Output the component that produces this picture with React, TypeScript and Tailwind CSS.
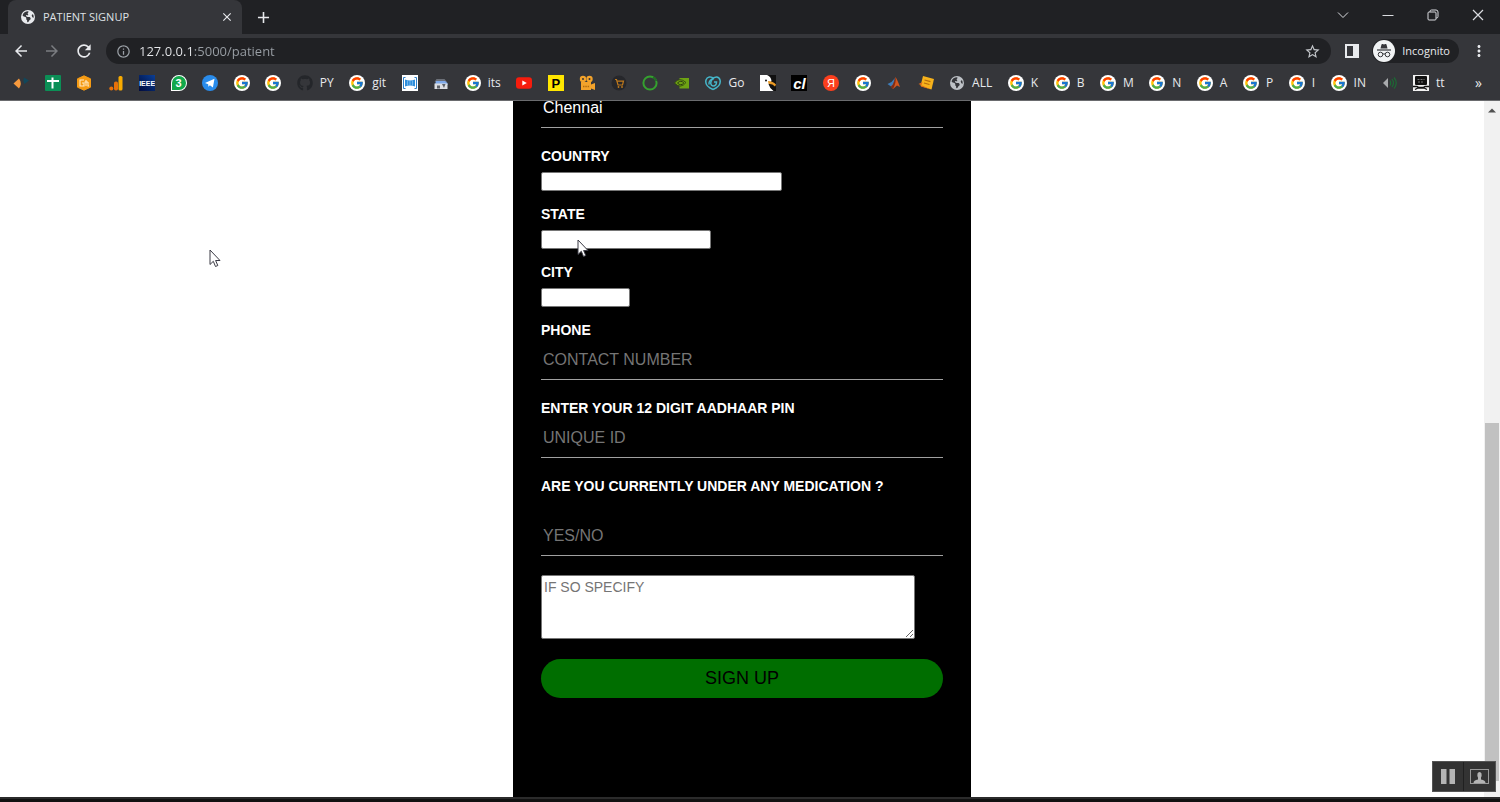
import type { ReactNode } from "react";
import { FaEarthAmericas, FaGithub } from "react-icons/fa6";
import { FcGoogle } from "react-icons/fc";
import {
  MdAdd,
  MdArrowBack,
  MdArrowForward,
  MdClose,
  MdInfoOutline,
  MdMoreVert,
  MdRefresh,
  MdStarBorder,
} from "react-icons/md";

type Bookmark = { name: string; icon: ReactNode; label?: string };

const Google = () => (
  <span className="flex size-4 items-center justify-center rounded-full bg-white">
    <FcGoogle size={14} />
  </span>
);

const Fish = () => (
  <svg viewBox="0 0 16 16" className="size-4">
    <path d="M.5 8.500L6 3.500q3.500 5 0 10z" fill="#f79a3e" />
    <path d="M11 2.500l5 3-4.500 3.500q-2-3-.5-6.500z" fill="#12475a" />
  </svg>
);

const Sheets = () => (
  <svg viewBox="0 0 16 16" className="size-4">
    <rect width="16" height="16" rx="1" fill="#0b8f56" />
    <path d="M2 6h12M7.500 2.500v11" stroke="#fff" strokeWidth="2" />
  </svg>
);

const Hexagon = () => (
  <svg viewBox="0 0 16 16" className="size-4">
    <path d="M8 .8l6.500 3v8.400L8 15.200l-6.500-3V3.800z" fill="#f59b14" stroke="#f59b14" strokeLinejoin="round" />
    <path d="M8 5H4v6h4V8H6M10 5v6M8.500 7H12M12 7v4h1" fill="none" stroke="#ffe9c4" strokeWidth="1.100" />
  </svg>
);

const Analytics = () => (
  <svg viewBox="0 0 16 16" className="size-4">
    <circle cx="3.300" cy="13.500" r="2" fill="#e8710a" />
    <rect x="6" y="6.500" width="4" height="9" rx="1.800" fill="#e8710a" />
    <rect x="10.500" y="1" width="4" height="14.500" rx="1.500" fill="#f9ab00" />
  </svg>
);

const Ieee = () => (
  <span className="flex size-4 items-center justify-center overflow-hidden bg-linear-to-tr from-[#020b3d] to-[#0b3f96] font-['Liberation_Sans'] text-[7px] leading-none font-bold text-white">
    IEEE
  </span>
);

const Whatsapp = () => (
  <span className="flex size-4 items-center justify-center rounded-full rounded-bl-sm border border-white bg-[#12a84b] font-['Liberation_Sans'] text-[11px] leading-none font-bold text-white">
    3
  </span>
);

const Telegram = () => (
  <svg viewBox="0 0 16 16" className="size-4">
    <circle cx="8" cy="8" r="8" fill="#2a8ceb" />
    <path d="M3 8l9.500-4.200-1.600 8.700-3-2.200-1.500 1.500-.2-2.600z" fill="#fff" />
  </svg>
);

const Scan = () => (
  <svg viewBox="0 0 16 16" className="size-4">
    <rect width="16" height="16" fill="#fff" />
    <path d="M3.500 2.500h-2v11h2M12.500 2.500h2v11h-2" fill="none" stroke="#2b7fc9" />
    <path d="M3 4.500q5 1.800 10 0v7q-5-1.800-10 0z" fill="#2e8fdd" />
    <path d="M5.500 5.500v5M8 6v4M10.500 5.500v5" stroke="#8cc4f0" strokeWidth=".7" />
  </svg>
);

const Printer = () => (
  <svg viewBox="0 0 16 16" className="size-4">
    <path d="M3.500 4h8l2.500 3H1.500z" fill="#6c7078" />
    <path d="M3 6h9l2.500 2v2H2z" fill="#7fa9e8" />
    <path d="M1.500 8.500h13V14h-13z" fill="#dcdee2" />
    <path d="M4 10.500h3v3H4zM9 9h3.500L11 13z" fill="#5d6168" />
  </svg>
);

const Youtube = () => (
  <svg viewBox="0 0 16 16" className="size-4">
    <rect y="2.300" width="16" height="11.400" rx="3" fill="#f61c0d" />
    <path d="M6.300 5.500v5L10.800 8z" fill="#fff" />
  </svg>
);

const LetterP = () => (
  <span className="flex size-4 items-center justify-center bg-[#ffe600] font-['Liberation_Sans'] text-[13px] leading-none font-bold text-black">
    P
  </span>
);

const Camera = () => (
  <svg viewBox="0 0 16 16" className="size-4">
    <circle cx="4" cy="4" r="3.200" fill="#f3a32b" />
    <circle cx="10.500" cy="4" r="3.200" fill="#f3a32b" />
    <circle cx="4" cy="4" r="1" fill="#35363a" />
    <circle cx="10.500" cy="4" r="1" fill="#35363a" />
    <path d="M2 7h10v2.500L16 8v7l-4-1.500V15H2z" fill="#f3a32b" />
    <path d="M4 11.500h6.500" stroke="#b36d0e" strokeWidth="1.500" strokeDasharray="1.500 .8" />
  </svg>
);

const Cart = () => (
  <svg viewBox="0 0 16 16" className="size-4">
    <circle cx="8" cy="8" r="7.500" fill="#26272b" />
    <path d="M4 4.500h1.500L7 10h4.500l1-3.800H6" fill="none" stroke="#c07a1c" strokeWidth="1.200" />
    <circle cx="7.500" cy="12" r=".9" fill="#c07a1c" />
    <circle cx="11" cy="12" r=".9" fill="#c07a1c" />
  </svg>
);

const Ring = () => (
  <svg viewBox="0 0 16 16" className="size-4">
    <circle cx="8" cy="8" r="6.600" fill="none" stroke="#35a02f" strokeWidth="2" />
    <path d="M11 2.200A6.600 6.600 0 0 1 14.300 6" fill="none" stroke="#236b26" strokeWidth="2.200" />
  </svg>
);

const Nvidia = () => (
  <svg viewBox="0 0 16 16" className="size-4">
    <path d="M5.500 3H15v10.500H5.500z" fill="#6ea313" />
    <path d="M.5 8q5-6.500 11.500-.5-5.500 7-11.500.5z" fill="#6ea313" stroke="#2f4312" strokeWidth=".8" />
    <path d="M3.500 8q3.500-3.500 6.300 0-3 3.500-6.300 0z" fill="none" stroke="#2c3d10" />
  </svg>
);

const GodaddyHeart = () => (
  <svg viewBox="0 0 16 16" className="size-4" fill="none" stroke="#45b5c9" strokeWidth="1.500">
    <path d="M8 14.500C3 12.500 0 9 1 5 2 1.500 6 1 9 3.500" />
    <path d="M8 14.500c5-2 8-5.500 7-9.500C14 1 9.500 1 7 4.500c-2 3-1.500 6 1 6.500 2 0 3.500-1.500 3.500-4H9" />
    <path d="M4 9.500C3.500 6.500 6 4 9 3.500" />
  </svg>
);

const Bird = () => (
  <svg viewBox="0 0 16 16" className="size-4">
    <rect width="16" height="16" fill="#111" />
    <path d="M0 0h7q4 1.500 4.500 6-1.500 2-3 3 1 4 5 7H0z" fill="#fff" />
    <path d="M8 6q5 0 8 3.500l-1 2q-2-2.500-6.500-2.800z" fill="#eb9a25" />
    <circle cx="6" cy="5.500" r="1" fill="#111" />
  </svg>
);

const Cl = () => (
  <span className="flex size-4 items-center justify-center bg-black font-['Liberation_Sans'] text-[15px] leading-none font-bold text-white italic">
    cl
  </span>
);

const Yandex = () => (
  <span className="flex size-4 items-center justify-center rounded-full bg-[#fc3f1d] font-['Liberation_Sans'] text-[11px] leading-none text-white">
    Я
  </span>
);

const Matlab = () => (
  <svg viewBox="0 0 16 16" className="size-4">
    <path d="M1.500 9l4-2L9 3 7 10l-2 1.500z" fill="#3e7cb8" />
    <path d="M9.500 2q2 3 4.500 10l-3-1.500-4 3.500L5 11.500q3-2 4.500-9.500z" fill="#d2571f" />
    <path d="M9.500 2q1 5-2.500 12L5 11.500q3-2 4.500-9.500z" fill="#7c2c17" />
  </svg>
);

const Note = () => (
  <svg viewBox="0 0 16 16" className="size-4">
    <path d="M5 1l11 3-2.500 10.500L2.500 11z" fill="#f6b21b" />
    <path d="M.5 9l4-2-1.500 4.500 10 3z" fill="#e06a1c" />
    <path d="M6.500 5l6 1.700M6 8l5.500 1.500" stroke="#b56a0c" strokeWidth="1.200" />
  </svg>
);

const Speaker = () => (
  <svg viewBox="0 0 16 16" className="size-4">
    <path d="M1 8l5-5v10z" fill="#a9abad" />
    <path d="M8 5.500q1.500 2.500 0 5M10 4q3 4 0 8M12 2.500q4.500 5.500 0 11" fill="none" stroke="#1c6a34" strokeWidth="1.200" />
  </svg>
);

const Monitor = () => (
  <svg viewBox="0 0 16 16" className="size-4">
    <rect width="16" height="16" fill="#f1f1f1" />
    <rect x="2" y="1" width="12" height="9" rx="1" fill="#111" />
    <path d="M4.500 4.500h7M5 7h6" stroke="#777" strokeDasharray="2 1" />
    <path d="M0 11.500h4l2 1h4l2-1h4M2 14.500l3-1.500h6l3 1.500" fill="none" stroke="#111" strokeWidth="1.300" />
  </svg>
);

const bookmarks: Bookmark[] = [
  { name: "fish", icon: <Fish /> },
  { name: "sheets", icon: <Sheets /> },
  { name: "hexagon", icon: <Hexagon /> },
  { name: "analytics", icon: <Analytics /> },
  { name: "ieee", icon: <Ieee /> },
  { name: "whatsapp", icon: <Whatsapp /> },
  { name: "telegram", icon: <Telegram /> },
  { name: "google-1", icon: <Google /> },
  { name: "google-2", icon: <Google /> },
  { name: "github", icon: <FaGithub size={16} className="text-[#24262a]" />, label: "PY" },
  { name: "git", icon: <Google />, label: "git" },
  { name: "scan", icon: <Scan /> },
  { name: "printer", icon: <Printer /> },
  { name: "its", icon: <Google />, label: "its" },
  { name: "youtube", icon: <Youtube /> },
  { name: "p", icon: <LetterP /> },
  { name: "camera", icon: <Camera /> },
  { name: "cart", icon: <Cart /> },
  { name: "ring", icon: <Ring /> },
  { name: "nvidia", icon: <Nvidia /> },
  { name: "go", icon: <GodaddyHeart />, label: "Go" },
  { name: "bird", icon: <Bird /> },
  { name: "cl", icon: <Cl /> },
  { name: "yandex", icon: <Yandex /> },
  { name: "google-3", icon: <Google /> },
  { name: "matlab", icon: <Matlab /> },
  { name: "note", icon: <Note /> },
  { name: "all", icon: <FaEarthAmericas size={14} className="mx-px text-[#bdc1c6]" />, label: "ALL" },
  { name: "k", icon: <Google />, label: "K" },
  { name: "b", icon: <Google />, label: "B" },
  { name: "m", icon: <Google />, label: "M" },
  { name: "n", icon: <Google />, label: "N" },
  { name: "a", icon: <Google />, label: "A" },
  { name: "pp", icon: <Google />, label: "P" },
  { name: "i", icon: <Google />, label: "I" },
  { name: "in", icon: <Google />, label: "IN" },
  { name: "speaker", icon: <Speaker /> },
  { name: "tt", icon: <Monitor />, label: "tt" },
];

function TabStrip() {
  return (
    <div className="flex h-[34px] items-center justify-between bg-[#202124] pl-2">
      <div className="flex h-full items-center">
        <div className="flex h-full w-[234px] items-center rounded-t-lg bg-[#35363a] pr-2 pl-3">
          <FaEarthAmericas size={14} className="mr-2 ml-px text-[#e8eaed]" />
          <span className="flex-1 text-[11px] text-[#dfe1e5]">PATIENT SIGNUP</span>
          <button aria-label="Close tab">
            <MdClose size={14} />
          </button>
        </div>
        <button aria-label="New tab" className="ml-3">
          <MdAdd size={19} />
        </button>
      </div>
      <div className="flex items-center gap-[33px] pr-4 pb-1 text-[#dadce0]">
        <button aria-label="Search tabs">
          <svg viewBox="0 0 12 12" className="size-3" fill="none" stroke="currentColor">
            <path d="M1 3.500l5 5 5-5" />
          </svg>
        </button>
        <button aria-label="Minimize">
          <svg viewBox="0 0 12 12" className="size-3" fill="none" stroke="currentColor">
            <path d="M.5 6.500h11" />
          </svg>
        </button>
        <button aria-label="Restore">
          <svg viewBox="0 0 12 12" className="size-3" fill="none" stroke="currentColor">
            <rect x="1" y="3" width="8" height="8" rx="1" />
            <path d="M3 3V2.500Q3 1 4.500 1H9q2 0 2 2v4.500Q11 9 9.500 9H9" />
          </svg>
        </button>
        <button aria-label="Close window">
          <svg viewBox="0 0 12 12" className="size-3" fill="none" stroke="currentColor" strokeWidth="1.200">
            <path d="M1 1l10 10M11 1L1 11" />
          </svg>
        </button>
      </div>
    </div>
  );
}

function Toolbar() {
  return (
    <div className="flex h-[34px] items-center bg-[#35363a] px-3">
      <div className="flex items-center gap-[13px]">
        <button aria-label="Back">
          <MdArrowBack size={18} />
        </button>
        <button aria-label="Forward" className="text-[#7b7d81]">
          <MdArrowForward size={18} />
        </button>
        <button aria-label="Reload">
          <MdRefresh size={20} />
        </button>
      </div>
      <div className="ml-3 flex h-[26px] flex-1 items-center rounded-full bg-[#202124] px-2.5">
        <MdInfoOutline size={15} className="text-[#9aa0a6]" />
        <input
          aria-label="Address"
          defaultValue="127.0.0.1:5000/patient"
          className="ml-2 flex-1 bg-[linear-gradient(90deg,#e8eaed_54px,#9aa0a6_54px)] bg-clip-text text-[13px] leading-[18px] text-transparent outline-none"
        />
        <button aria-label="Bookmark this page" className="text-[#c4c7cb]">
          <MdStarBorder size={17} />
        </button>
      </div>
      <button aria-label="Side panel" className="ml-[14px]">
        <svg viewBox="0 0 14 14" className="size-[14px]">
          <path d="M0 0h14v14H0zM2 2v10h6V2z" fill="#e8eaed" fillRule="evenodd" />
        </svg>
      </button>
      <button className="ml-[13px] flex h-6 items-center gap-[7px] rounded-full bg-[#202124] pr-[9px] pl-px text-[11px]">
        <svg viewBox="0 0 22 22" className="size-[22px]">
          <circle cx="11" cy="11" r="11" fill="#f1f3f4" />
          <path d="M7.500 8.500l1-4q.3-.8 1.200-.5l1.300.4 1.300-.4q.9-.3 1.200.5l1 4z" fill="#35363a" />
          <path d="M4 10h14" stroke="#35363a" strokeWidth="1.200" />
          <g fill="none" stroke="#35363a">
            <circle cx="7.500" cy="14.500" r="2.300" />
            <circle cx="14.500" cy="14.500" r="2.300" />
            <path d="M9.800 14.200q1.200-.8 2.400 0" />
          </g>
        </svg>
        Incognito
      </button>
      <button aria-label="Menu" className="ml-[11px]">
        <MdMoreVert size={18} />
      </button>
    </div>
  );
}

function BookmarksBar() {
  return (
    <nav
      aria-label="Bookmarks"
      className="flex h-[33px] items-center border-b border-[#6a6b6e] bg-[#35363a] pr-[18px] pb-0.5 pl-[13px] text-xs"
    >
      <ul className="flex flex-1 items-center justify-between">
        {bookmarks.map((bookmark) => (
          <li key={bookmark.name}>
            <a href="#" aria-label={bookmark.name} className="flex items-center gap-[7px]">
              {bookmark.icon}
              {bookmark.label && <span>{bookmark.label}</span>}
            </a>
          </li>
        ))}
      </ul>
      <button aria-label="More bookmarks" className="ml-[30px] text-sm">
        »
      </button>
    </nav>
  );
}

const lineInput =
  "mb-[19px] block h-[41px] w-full border-b border-[#a0a0a0] bg-black px-0.5 pt-0.5 text-base text-white outline-none placeholder:text-[#757575]";
const labelText = "block text-sm leading-[18px] font-bold";
const selectBox = "mt-[7px] mb-[14px] block h-[19px] appearance-none rounded-xs border border-[#767676] bg-white";

function SignupForm() {
  return (
    <form
      className="mx-auto w-[458px] shrink-0 bg-black px-7 pb-[99px] font-['Liberation_Sans',Arial,sans-serif] text-white"
      onSubmit={(e) => e.preventDefault()}
    >
      <input aria-label="Address" defaultValue="Chennai" className={lineInput} />

      <label htmlFor="country" className={labelText}>COUNTRY</label>
      <select id="country" className={`${selectBox} w-[241px]`} />

      <label htmlFor="state" className={labelText}>STATE</label>
      <select id="state" className={`${selectBox} w-[170px]`} />

      <label htmlFor="city" className={labelText}>CITY</label>
      <select id="city" className={`${selectBox} w-[89px]`} />

      <label htmlFor="phone" className={labelText}>PHONE</label>
      <input id="phone" placeholder="CONTACT NUMBER" className={lineInput} />

      <label htmlFor="aadhaar" className={labelText}>ENTER YOUR 12 DIGIT AADHAAR PIN</label>
      <input id="aadhaar" placeholder="UNIQUE ID" className={lineInput} />

      <label htmlFor="medication" className={`${labelText} mb-5`}>ARE YOU CURRENTLY UNDER ANY MEDICATION ?</label>
      <input id="medication" placeholder="YES/NO" className={lineInput} />

      <textarea
        aria-label="If so specify"
        placeholder="IF SO SPECIFY"
        className="mb-5 block h-16 w-[374px] resize rounded-xs border border-[#767676] bg-white px-0.5 py-[3px] text-sm leading-4 text-black placeholder:text-[#757575]"
      />
      <button type="submit" className="block h-[39px] w-full rounded-full bg-[#006e00] pb-0.5 text-lg leading-none text-black">
        SIGN UP
      </button>
    </form>
  );
}

function Scrollbar() {
  return (
    <div className="flex w-4 flex-col items-center bg-[#f1f1f1]">
      <svg viewBox="0 0 16 16" className="mt-px size-4 shrink-0">
        <path d="M4 10.500l4-4 4 4z" fill="#505050" />
      </svg>
      <div className="flex-[305]" />
      <div className="w-[14px] flex-[359] bg-[#c1c1c1]" />
      <div className="h-4 shrink-0" />
    </div>
  );
}

function Cursor({ className }: { className: string }) {
  return (
    <svg viewBox="0 0 12 19" className={`absolute h-[19px] w-3 ${className}`}>
      <path
        d="M1 1v14.500l3.300-3.200 2.200 5.200 2.300-1-2.200-5H11z"
        fill="#fff"
        stroke="#3a3a44"
        strokeLinejoin="round"
      />
    </svg>
  );
}

export default function App() {
  return (
    <div className="flex h-screen flex-col overflow-hidden bg-white font-['Open_Sans','Noto_Sans',sans-serif] text-[#e8eaed]">
      <TabStrip />
      <Toolbar />
      <BookmarksBar />
      <div className="relative flex min-h-0 flex-1">
        <main className="flex min-w-0 flex-1 flex-col justify-end overflow-hidden">
          <SignupForm />
        </main>
        <Scrollbar />

        <Cursor className="top-[148px] left-[209px]" />
        <Cursor className="top-[138px] left-[577px]" />
        <div className="absolute right-1 bottom-[5px] flex divide-x divide-[#202020] border border-[#555] bg-[#333]">
          <button aria-label="Pause" className="flex h-[29px] w-[31px] items-center justify-center">
            <svg viewBox="0 0 14 15" className="h-[15px] w-[14px]" fill="#b4b4b4">
              <path d="M0 0h5.500v15H0zM8.500 0H14v15H8.500z" />
            </svg>
          </button>
          <button aria-label="Show presenter" className="flex h-[29px] w-[31px] items-center justify-center">
            <svg viewBox="0 0 19 15" className="h-[15px] w-[19px]">
              <rect x=".5" y=".5" width="18" height="14" fill="none" stroke="#999" />
              <path d="M3.500 14q0-3 4.500-3.500V8.500Q7 7 7.500 4.500 8 3 9.500 3t2 1.500Q12 7 11 8.500v2q4.500.5 4.500 3.500z" fill="#b4b4b4" />
            </svg>
          </button>
        </div>
      </div>
      <div className="h-[5px] shrink-0 border-t-2 border-[#2b2b2b] bg-[#111]" />
    </div>
  );
}
